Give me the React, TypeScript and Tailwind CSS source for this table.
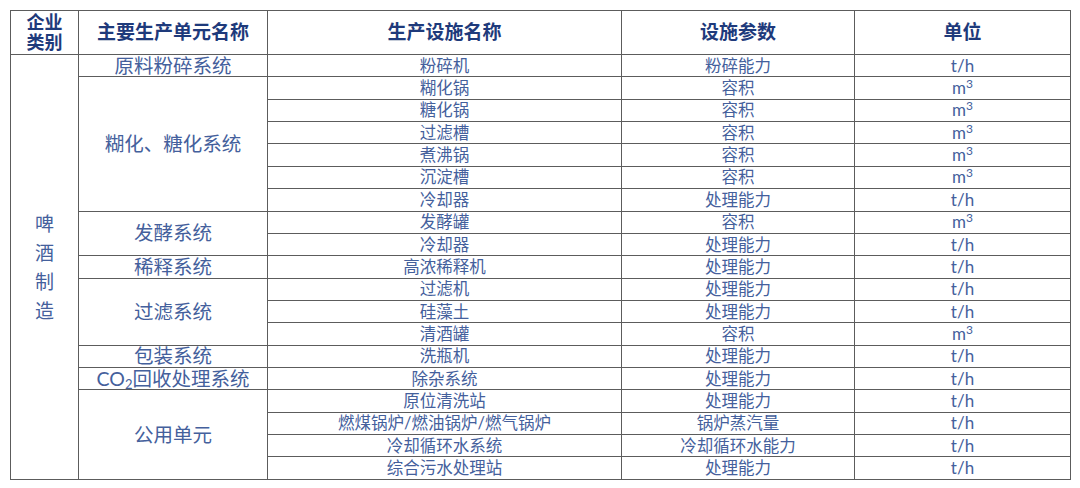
type Item = { name: string; param: string; unit: "t/h" | "m3" };
type Group = { title: React.ReactNode; items: Item[] };

const groups: Group[] = [
  { title: "原料粉碎系统", items: [{ name: "粉碎机", param: "粉碎能力", unit: "t/h" }] },
  {
    title: "糊化、糖化系统",
    items: [
      { name: "糊化锅", param: "容积", unit: "m3" },
      { name: "糖化锅", param: "容积", unit: "m3" },
      { name: "过滤槽", param: "容积", unit: "m3" },
      { name: "煮沸锅", param: "容积", unit: "m3" },
      { name: "沉淀槽", param: "容积", unit: "m3" },
      { name: "冷却器", param: "处理能力", unit: "t/h" },
    ],
  },
  {
    title: "发酵系统",
    items: [
      { name: "发酵罐", param: "容积", unit: "m3" },
      { name: "冷却器", param: "处理能力", unit: "t/h" },
    ],
  },
  { title: "稀释系统", items: [{ name: "高浓稀释机", param: "处理能力", unit: "t/h" }] },
  {
    title: "过滤系统",
    items: [
      { name: "过滤机", param: "处理能力", unit: "t/h" },
      { name: "硅藻土", param: "处理能力", unit: "t/h" },
      { name: "清酒罐", param: "容积", unit: "m3" },
    ],
  },
  { title: "包装系统", items: [{ name: "洗瓶机", param: "处理能力", unit: "t/h" }] },
  {
    title: (
      <>
        CO<sub className="text-[13px]">2</sub>回收处理系统
      </>
    ),
    items: [{ name: "除杂系统", param: "处理能力", unit: "t/h" }],
  },
  {
    title: "公用单元",
    items: [
      { name: "原位清洗站", param: "处理能力", unit: "t/h" },
      { name: "燃煤锅炉/燃油锅炉/燃气锅炉", param: "锅炉蒸汽量", unit: "t/h" },
      { name: "冷却循环水系统", param: "冷却循环水能力", unit: "t/h" },
      { name: "综合污水处理站", param: "处理能力", unit: "t/h" },
    ],
  },
];

const total = groups.reduce((n, g) => n + g.items.length, 0);

function Unit({ unit }: { unit: Item["unit"] }) {
  if (unit === "t/h") return <>t/h</>;
  return (
    <>
      m<sup className="text-[12px]">3</sup>
    </>
  );
}

export default function App() {
  const cell = "border border-[#5c5c5c] p-0 text-center";
  return (
    <div className="w-[1080px] h-[488px] bg-white pl-[10px] pt-[10px] font-['Lato','Noto_Sans_CJK_SC',sans-serif]">
      <table className="table-fixed border-collapse w-[1060px]">
        <colgroup>
          <col className="w-[68px]" />
          <col className="w-[189px]" />
          <col className="w-[354px]" />
          <col className="w-[233px]" />
          <col className="w-[216px]" />
        </colgroup>
        <thead>
          <tr className="h-[44px] text-[#1e3a7b] font-bold">
            <th className={`${cell} text-[18px] leading-[20px] align-top pt-[1px]`}>
              企业
              <br />
              类别
            </th>
            <th className={`${cell} text-[19px]`}>主要生产单元名称</th>
            <th className={`${cell} text-[19px]`}>生产设施名称</th>
            <th className={`${cell} text-[19px]`}>设施参数</th>
            <th className={`${cell} text-[19px]`}>单位</th>
          </tr>
        </thead>
        <tbody className="text-[#44609c]">
          {groups.map((g, gi) =>
            g.items.map((it, ii) => (
              <tr key={`${gi}-${ii}`} className="h-[22.37px] leading-[20px]">
                {gi === 0 && ii === 0 && (
                  <td rowSpan={total} className={`${cell} text-[19px] leading-[29px]`}>
                    啤
                    <br />
                    酒
                    <br />
                    制
                    <br />
                    造
                  </td>
                )}
                {ii === 0 && (
                  <td rowSpan={g.items.length} className={`${cell} text-[19.5px] leading-[20px]`}>
                    {g.title}
                  </td>
                )}
                <td className={`${cell} text-[16.5px]`}>{it.name}</td>
                <td className={`${cell} text-[16.5px]`}>{it.param}</td>
                <td className={`${cell} text-[17px]`}>
                  <Unit unit={it.unit} />
                </td>
              </tr>
            ))
          )}
        </tbody>
      </table>
    </div>
  );
}
